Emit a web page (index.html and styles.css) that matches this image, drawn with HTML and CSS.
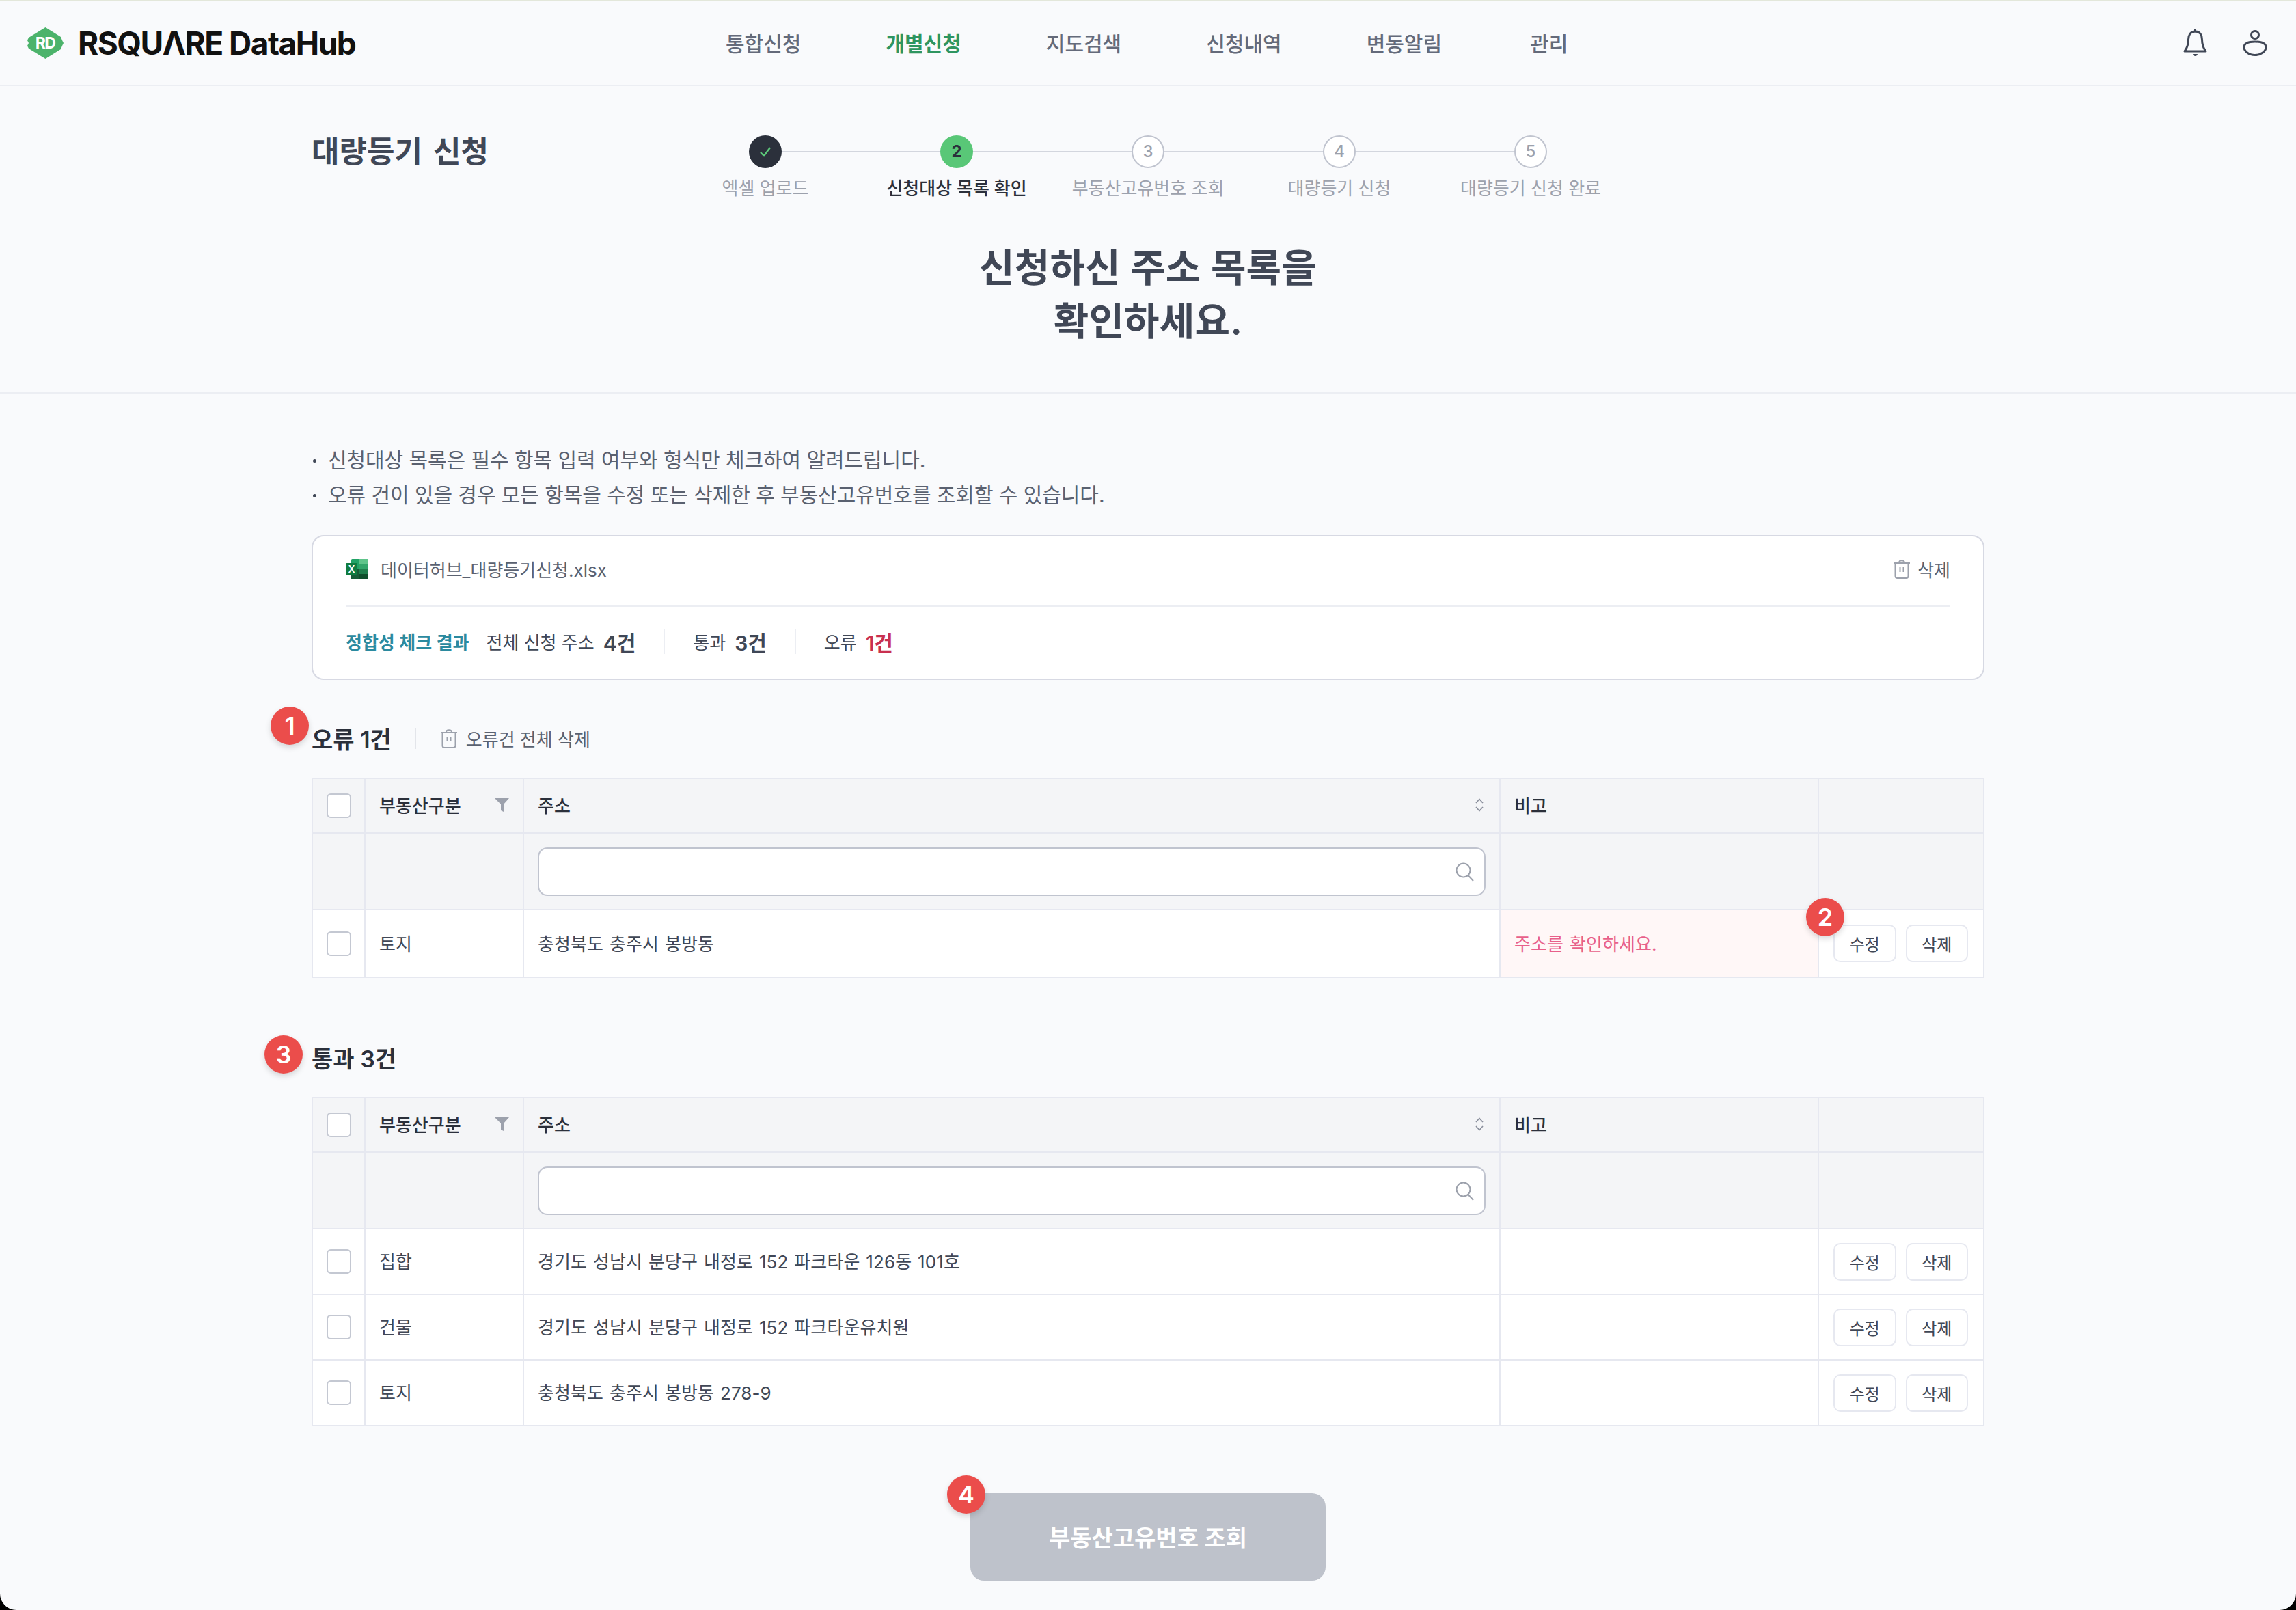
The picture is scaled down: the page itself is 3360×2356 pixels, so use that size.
FILE: index.html
```html
<!DOCTYPE html>
<html lang="ko">
<head>
  <meta charset="UTF-8" />
  <meta name="viewport" content="width=device-width, initial-scale=1.0" />
  <title>RSQUARE DataHub - 대량등기 신청</title>
  <link rel="stylesheet" href="styles.css">
</head>
<body>
  <div class="page">
    <header class="topbar">
      <a class="logo">
        <svg class="logo-mark" viewBox="0 0 53 46">
          <path d="M26.5 0 L49 14 L51 19 L53 23 L51 27 L49 32 L26.5 46 L2 31 L0 27 L2 23 L0 19 L2 15 Z" fill="#4cb36b"/>
          <text x="26" y="31" text-anchor="middle" class="logo-mark-text">RD</text>
        </svg>
        <span class="logo-text">RSQUΛRE DataHub</span>
      </a>
      <nav class="nav">
        <a>통합신청</a>
        <a class="active">개별신청</a>
        <a>지도검색</a>
        <a>신청내역</a>
        <a>변동알림</a>
        <a>관리</a>
      </nav>
      <div class="top-icons">
        <svg class="bell" viewBox="0 0 35 40" fill="none" stroke="#404756" stroke-width="3">
          <path d="M17.5 3 C10 3 7.5 9 7.5 15 C7.5 23 5 28 2 32 H33 C30 28 27.5 23 27.5 15 C27.5 9 25 3 17.5 3 Z" stroke-linejoin="round"/>
          <path d="M17.5 0.5 V3" stroke-linecap="round"/>
          <path d="M14 36 H21 C20.5 40 14.5 40 14 36 Z" fill="#404756" stroke="none"/>
        </svg>
        <svg class="person" viewBox="0 0 36 38" fill="none" stroke="#404756" stroke-width="3">
          <ellipse cx="18" cy="7" rx="5.5" ry="5.5"/>
          <path d="M18 17 C8 17 2 19 2 25 C2 31 9 36.5 18 36.5 C27 36.5 34 31 34 25 C34 19 28 17 18 17 Z"/>
        </svg>
      </div>
    </header>

    <section class="hero">
      <div class="hero-top">
        <h1 class="hero-title">대량등기 신청</h1>
        <ol class="steps">
          <li class="step done">
            <span class="step-dot">
              <svg viewBox="0 0 20 20" width="20" height="20" fill="none" stroke="#5cc97a" stroke-width="2.4"><path d="M3 11 L8 16 L17 4"/></svg>
            </span>
            <span class="step-label">엑셀 업로드</span>
          </li>
          <li class="step current">
            <span class="step-dot">2</span>
            <span class="step-label">신청대상 목록 확인</span>
          </li>
          <li class="step">
            <span class="step-dot">3</span>
            <span class="step-label">부동산고유번호 조회</span>
          </li>
          <li class="step">
            <span class="step-dot">4</span>
            <span class="step-label">대량등기 신청</span>
          </li>
          <li class="step">
            <span class="step-dot">5</span>
            <span class="step-label">대량등기 신청 완료</span>
          </li>
        </ol>
      </div>
      <h2 class="hero-heading">신청하신 주소 목록을<br>확인하세요.</h2>
    </section>

    <main class="content">
      <ul class="notes">
        <li>신청대상 목록은 필수 항목 입력 여부와 형식만 체크하여 알려드립니다.</li>
        <li>오류 건이 있을 경우 모든 항목을 수정 또는 삭제한 후 부동산고유번호를 조회할 수 있습니다.</li>
      </ul>

      <div class="file-card">
        <div class="file-row">
          <svg class="excel" viewBox="0 0 33 30">
            <rect x="8" y="0" width="25" height="30" rx="1.5" fill="#21a366"/>
            <rect x="20" y="0" width="13" height="8" fill="#5fc48a"/>
            <rect x="20" y="8" width="13" height="7" fill="#33a56a"/>
            <rect x="20" y="15" width="13" height="7" fill="#1f7f4c"/>
            <rect x="8" y="15" width="12" height="15" fill="#185c37"/>
            <rect x="20" y="22" width="13" height="8" fill="#104f2c"/>
            <rect x="0" y="6" width="17" height="18" rx="1.5" fill="#107c41"/>
            <text x="8.5" y="20" text-anchor="middle" class="excel-text">X</text>
          </svg>
          <span class="file-name">데이터허브_대량등기신청.xlsx</span>
          <a class="file-delete">
            <svg class="trash" viewBox="0 0 26 29" fill="none" stroke="#9ca1ac" stroke-width="2">
              <path d="M1 6 H25 M9 5.5 C9 1 17 1 17 5.5 M3.5 6 V25 C3.5 27 4.5 28 6.5 28 H19.5 C21.5 28 22.5 27 22.5 25 V6 M10.5 12 V19 M15.5 12 V19"/>
            </svg>
            삭제
          </a>
        </div>
        <div class="result-row">
          <span class="result-title">정합성 체크 결과</span>
          <span class="result-item first">전체 신청 주소 <b>4건</b></span>
          <span class="result-item">통과 <b>3건</b></span>
          <span class="result-item last">오류 <b class="red">1건</b></span>
        </div>
      </div>

      <div class="section-head error-head">
        <span class="badge badge-1">1</span>
        <h3>오류 1건</h3>
        <a class="delete-all">
          <svg class="trash" viewBox="0 0 26 29" fill="none" stroke="#9ca1ac" stroke-width="2">
            <path d="M1 6 H25 M9 5.5 C9 1 17 1 17 5.5 M3.5 6 V25 C3.5 27 4.5 28 6.5 28 H19.5 C21.5 28 22.5 27 22.5 25 V6 M10.5 12 V19 M15.5 12 V19"/>
          </svg>
          오류건 전체 삭제
        </a>
      </div>

      <table class="grid">
        <colgroup><col class="c-check"><col class="c-type"><col class="c-addr"><col class="c-note"><col class="c-act"></colgroup>
        <thead>
          <tr class="head-row">
            <th><input type="checkbox" class="check"></th>
            <th><div class="th-flex">부동산구분
              <svg class="filter" viewBox="0 0 21 20"><path d="M0 0 H21 L13 9 V20 L9 18 V9 Z" fill="#9ca1ac"/></svg>
            </div></th>
            <th><div class="th-flex">주소
              <svg class="sort" viewBox="0 0 14 20" fill="none" stroke="#8a8f9c" stroke-width="1.6"><path d="M2 7 L7 1.5 L12 7 M2 13 L7 18.5 L12 13"/></svg>
            </div></th>
            <th>비고</th>
            <th></th>
          </tr>
          <tr class="search-row">
            <th></th>
            <th></th>
            <th>
              <div class="search">
                <input type="text">
                <svg class="search-icon" viewBox="0 0 27 28" fill="none" stroke="#9ca1ac" stroke-width="2"><circle cx="11.5" cy="11.5" r="10"/><path d="M18.5 19 L26 27"/></svg>
              </div>
            </th>
            <th></th>
            <th></th>
          </tr>
        </thead>
        <tbody>
          <tr class="row-first">
            <td><input type="checkbox" class="check"></td>
            <td>토지</td>
            <td>충청북도 충주시 봉방동</td>
            <td class="note-error">주소를 확인하세요.</td>
            <td class="actions">
              <span class="badge badge-2">2</span>
              <div class="btns"><button>수정</button><button>삭제</button></div>
            </td>
          </tr>
        </tbody>
      </table>

      <div class="section-head pass-head">
        <span class="badge badge-3">3</span>
        <h3>통과 3건</h3>
      </div>

      <table class="grid">
        <colgroup><col class="c-check"><col class="c-type"><col class="c-addr"><col class="c-note"><col class="c-act"></colgroup>
        <thead>
          <tr class="head-row">
            <th><input type="checkbox" class="check"></th>
            <th><div class="th-flex">부동산구분
              <svg class="filter" viewBox="0 0 21 20"><path d="M0 0 H21 L13 9 V20 L9 18 V9 Z" fill="#9ca1ac"/></svg>
            </div></th>
            <th><div class="th-flex">주소
              <svg class="sort" viewBox="0 0 14 20" fill="none" stroke="#8a8f9c" stroke-width="1.6"><path d="M2 7 L7 1.5 L12 7 M2 13 L7 18.5 L12 13"/></svg>
            </div></th>
            <th>비고</th>
            <th></th>
          </tr>
          <tr class="search-row">
            <th></th>
            <th></th>
            <th>
              <div class="search">
                <input type="text">
                <svg class="search-icon" viewBox="0 0 27 28" fill="none" stroke="#9ca1ac" stroke-width="2"><circle cx="11.5" cy="11.5" r="10"/><path d="M18.5 19 L26 27"/></svg>
              </div>
            </th>
            <th></th>
            <th></th>
          </tr>
        </thead>
        <tbody>
          <tr>
            <td><input type="checkbox" class="check"></td>
            <td>집합</td>
            <td>경기도 성남시 분당구 내정로 152 파크타운 126동 101호</td>
            <td></td>
            <td class="actions"><div class="btns"><button>수정</button><button>삭제</button></div></td>
          </tr>
          <tr>
            <td><input type="checkbox" class="check"></td>
            <td>건물</td>
            <td>경기도 성남시 분당구 내정로 152 파크타운유치원</td>
            <td></td>
            <td class="actions"><div class="btns"><button>수정</button><button>삭제</button></div></td>
          </tr>
          <tr>
            <td><input type="checkbox" class="check"></td>
            <td>토지</td>
            <td>충청북도 충주시 봉방동 278-9</td>
            <td></td>
            <td class="actions"><div class="btns"><button>수정</button><button>삭제</button></div></td>
          </tr>
        </tbody>
      </table>

      <div class="submit-wrap">
        <button class="submit">
          <span class="badge badge-4">4</span>
          부동산고유번호 조회
        </button>
      </div>
    </main>
  </div>
</body>
</html>
```

FILE: styles.css
```css
* {
  box-sizing: border-box;
}
body {
  margin: 0;
  background-color: #000;
  font-family: Inter, "Noto Sans CJK KR", sans-serif;
  color: #404756;
}
.page {
  height: 2356px;
  background-color: #f9fafc;
  border-radius: 0 0 24px 24px;
  overflow: hidden;
}

/* top bar */
.topbar {
  display: flex;
  align-items: center;
  height: 126px;
  padding-left: 40px;
  border-top: 2px solid #e3e7da;
  border-bottom: 2px solid #eceef3;
}
.logo {
  display: flex;
  align-items: center;
  gap: 21px;
  width: 1022px;
}
.logo-mark {
  width: 53px;
  height: 46px;
}
.logo-mark-text {
  font-size: 23px;
  font-weight: 700;
  fill: #fff;
  letter-spacing: -1.5px;
}
.logo-text {
  font-size: 46px;
  font-weight: 700;
  color: #111;
  letter-spacing: -1.5px;
}
.nav {
  display: flex;
  gap: 124px;
  padding-bottom: 2px;
  font-size: 30px;
  font-weight: 500;
  color: #646a7a;
}
.nav a:last-child {
  margin-left: 5px;
}
.nav .active {
  color: #2f9560;
  font-weight: 700;
}
.top-icons {
  display: flex;
  align-items: center;
  gap: 52px;
  margin-left: auto;
  margin-right: 42px;
}
.bell {
  width: 35px;
  height: 40px;
}
.person {
  width: 36px;
  height: 38px;
}

/* title and stepper */
.hero {
  height: 450px;
  padding-top: 72px;
  border-bottom: 2px solid #eceef3;
}
.hero-top {
  display: flex;
  width: 2448px;
  margin: 0 auto;
}
.hero-title {
  width: 524px;
  margin: 0;
  font-size: 44px;
  font-weight: 600;
  line-height: 48px;
  word-spacing: 5px;
}
.steps {
  display: flex;
  margin: 0;
  padding: 0;
  list-style: none;
}
.step {
  position: relative;
  display: flex;
  flex-direction: column;
  align-items: center;
  gap: 12px;
  width: 280px;
  color: #9ca1ac;
  font-size: 26px;
  line-height: 36px;
}
.step:not(:last-child)::before {
  content: "";
  position: absolute;
  top: 23px;
  left: 50%;
  width: 100%;
  height: 2px;
  background-color: #d3d6de;
}
.step-dot {
  position: relative;
  display: flex;
  align-items: center;
  justify-content: center;
  width: 48px;
  height: 48px;
  border: 2px solid #c0c4cf;
  border-radius: 50%;
  background-color: #fff;
  font-size: 24px;
  font-weight: 500;
}
.step.done .step-dot {
  border-color: #2b303b;
  background-color: #2b303b;
}
.step.current .step-dot {
  border-color: #59c777;
  background-color: #59c777;
  color: #2b303b;
  font-weight: 700;
}
.step.current .step-label {
  color: #2b303b;
  font-weight: 500;
}
.hero-heading {
  margin: 59px 0 0;
  text-align: center;
  font-size: 56px;
  font-weight: 600;
  line-height: 78px;
  letter-spacing: 0.2px;
}

/* notes and file card */
.content {
  width: 2448px;
  margin: 0 auto;
  padding-top: 72px;
}
.notes {
  margin: 0;
  padding: 0;
  list-style: none;
  font-size: 30px;
  line-height: 51px;
  letter-spacing: -0.06px;
  color: #5a6170;
}
.notes li {
  position: relative;
  padding-left: 24px;
}
.notes li::before {
  content: "";
  position: absolute;
  top: 24px;
  left: 2px;
  width: 5px;
  height: 5px;
  border-radius: 50%;
  background-color: #404756;
}
.file-card {
  margin-top: 33px;
  padding: 0 48px;
  height: 212px;
  border: 2px solid #d7d9e3;
  border-radius: 18px;
  background-color: #fff;
}
.file-row {
  display: flex;
  align-items: center;
  height: 103px;
  padding-bottom: 6px;
  border-bottom: 2px solid #eceef3;
  font-size: 26px;
  color: #5a6170;
}
.excel {
  width: 33px;
  height: 30px;
  margin-right: 18px;
}
.excel-text {
  font-size: 14px;
  font-weight: 600;
  fill: #fff;
}
.file-delete {
  display: flex;
  align-items: center;
  gap: 10px;
  margin-left: auto;
}
.trash {
  width: 26px;
  height: 29px;
}
.result-row {
  display: flex;
  align-items: center;
  height: 105px;
  padding-bottom: 4px;
  font-size: 26px;
}
.result-title {
  margin-right: 25px;
  font-weight: 600;
  color: #2b8a9f;
}
.result-item {
  display: flex;
  align-items: center;
  gap: 13px;
  height: 36px;
  padding: 0 41px;
  border-right: 2px solid #eceef3;
}
.result-item b {
  font-size: 30px;
  font-weight: 600;
}
.result-item.first {
  padding-left: 0;
}
.result-item.last {
  border-right: 0;
}
.red {
  color: #c9304f;
}

/* section heads */
.section-head {
  position: relative;
  display: flex;
  align-items: center;
  height: 56px;
  padding-bottom: 2px;
}
.section-head h3 {
  margin: 0;
  font-size: 34px;
  font-weight: 600;
  color: #2b303b;
}
.error-head {
  margin-top: 58px;
}
.pass-head {
  margin-top: 89px;
}
.delete-all {
  display: flex;
  align-items: center;
  gap: 12px;
  height: 31px;
  margin-left: 34px;
  padding-left: 35px;
  border-left: 2px solid #e3e5ea;
  font-size: 26px;
  color: #5a6170;
}
.badge {
  position: absolute;
  display: flex;
  align-items: center;
  justify-content: center;
  width: 56px;
  height: 56px;
  border-radius: 50%;
  background-color: #eb4d4b;
  box-shadow: 0 4px 8px rgba(0, 0, 0, 0.15);
  color: #fff;
  font-size: 36px;
  font-weight: 600;
  z-index: 2;
}
.badge-1 {
  top: -19px;
  left: -60px;
}
.badge-2 {
  top: -18px;
  left: -19px;
}
.badge-3 {
  top: -5px;
  left: -69px;
}
.badge-4 {
  top: -26px;
  left: -34px;
}

/* tables */
.grid {
  width: 2446px;
  margin-top: 29px;
  border-collapse: collapse;
  table-layout: fixed;
  background-color: #fff;
  font-size: 26px;
}
.c-check {
  width: 77px;
}
.c-type {
  width: 232px;
}
.c-addr {
  width: 1429px;
}
.c-note {
  width: 466px;
}
.c-act {
  width: 242px;
}
.grid th,
.grid td {
  padding: 0 20px;
  border: 2px solid #e6e8f0;
  text-align: left;
}
.grid th {
  background-color: #f4f5f7;
  font-weight: 500;
  color: #2b303b;
}
.grid .head-row th {
  padding-bottom: 3px;
}
.grid td {
  padding-bottom: 3px;
  letter-spacing: 0.1px;
  word-spacing: 1.5px;
}
.grid th:first-child,
.grid td:first-child {
  padding: 0;
}
.head-row {
  height: 80px;
}
.search-row {
  height: 112px;
}
.grid tbody tr {
  height: 96px;
}
.grid tbody .row-first {
  height: 99px;
}
.th-flex {
  display: flex;
  align-items: center;
  justify-content: space-between;
}
.filter {
  width: 21px;
  height: 20px;
}
.sort {
  width: 14px;
  height: 20px;
  margin-right: 2px;
}
.check {
  display: block;
  appearance: none;
  width: 36px;
  height: 36px;
  margin: 0 auto;
  border: 2px solid #c4c8d2;
  border-radius: 6px;
  background-color: #fff;
}
.search {
  position: relative;
}
.search input {
  display: block;
  width: 100%;
  height: 71px;
  border: 2px solid #c0c4cf;
  border-radius: 14px;
  background-color: #fff;
}
.search-icon {
  position: absolute;
  top: 22px;
  right: 17px;
  width: 27px;
  height: 28px;
}
.note-error {
  background-color: #fff7f7;
  color: #e8608a;
}
.actions {
  position: relative;
}
.grid .actions {
  padding: 0 22px 0 21px;
}
.btns {
  display: flex;
  gap: 14px;
}
.btns button {
  width: 92px;
  height: 55px;
  padding: 0;
  border: 2px solid #e6e8f0;
  border-radius: 10px;
  background-color: #fff;
  font-family: inherit;
  font-size: 24px;
  color: #404756;
}

/* submit */
.submit-wrap {
  display: flex;
  justify-content: center;
  margin-top: 98px;
}
.submit {
  position: relative;
  width: 520px;
  height: 128px;
  padding-bottom: 3px;
  border: 0;
  border-radius: 20px;
  background-color: #bec2cb;
  color: #fff;
  font-family: inherit;
  font-size: 34px;
  font-weight: 600;
}
```
